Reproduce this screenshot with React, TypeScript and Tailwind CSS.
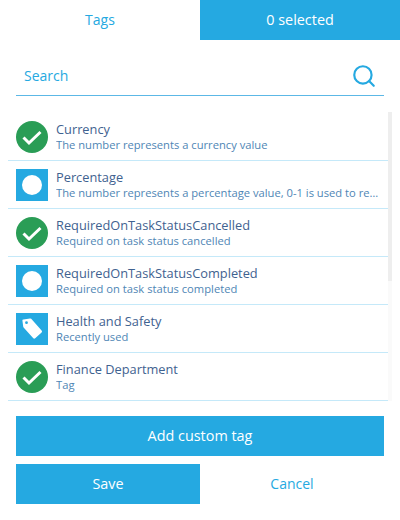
import { Search } from 'lucide-react'

type Tag = {
  name: string
  description: string
  icon: 'check' | 'circle' | 'tag'
}

const tags: Tag[] = [
  { name: 'Currency', description: 'The number represents a currency value', icon: 'check' },
  { name: 'Percentage', description: 'The number represents a percentage value, 0-1 is used to represent 0-100%', icon: 'circle' },
  { name: 'RequiredOnTaskStatusCancelled', description: 'Required on task status cancelled', icon: 'check' },
  { name: 'RequiredOnTaskStatusCompleted', description: 'Required on task status completed', icon: 'circle' },
  { name: 'Health and Safety', description: 'Recently used', icon: 'tag' },
  { name: 'Finance Department', description: 'Tag', icon: 'check' },
]

const TagIcon = ({ icon }: { icon: Tag['icon'] }) => {
  if (icon === 'check') {
    return (
      <div className="flex h-8 w-8 shrink-0 items-center justify-center rounded-full bg-[#2a9d56]">
        <svg width="32" height="32" viewBox="0 0 32 32" fill="none">
          <path d="M7.5 16.5l5.5 5.5L24.5 11" stroke="white" strokeWidth="3" />
        </svg>
      </div>
    )
  }
  if (icon === 'circle') {
    return (
      <div className="flex h-8 w-8 shrink-0 items-center justify-center bg-[#25a9e1]">
        <div className="h-5 w-5 rounded-full bg-white" />
      </div>
    )
  }
  return (
    <div className="flex h-8 w-8 shrink-0 items-center justify-center bg-[#25a9e1]">
      <svg width="32" height="32" viewBox="0 0 32 32">
        <path
          fillRule="evenodd"
          fill="white"
          d="M7.5 6.5L14 5.4a1.4 1.4 0 0 1 1.2 .4L25.6 17.6a1.4 1.4 0 0 1 0 1.9L19.2 25.2a1.4 1.4 0 0 1-1.9 0L7.6 14.6a1.4 1.4 0 0 1-.4-1L6.4 7.6a1 1 0 0 1 1.1-1.1zM10.5 8.3a1.4 1.4 0 1 0 0 2.8 1.4 1.4 0 0 0 0-2.8z"
        />
      </svg>
    </div>
  )
}

export default function App() {
  return (
    <div className="h-[520px] w-[400px] overflow-hidden bg-white font-['Open_Sans',sans-serif]">
      <div className="flex h-10 text-sm">
        <div className="flex flex-1 items-center justify-center text-[#25a9e1]">Tags</div>
        <div className="flex flex-1 items-center justify-center bg-[#25a9e1] text-[14.4px] font-medium text-white">0 selected</div>
      </div>

      <div className="mx-4 mt-3 flex h-11 items-center justify-between border-b border-[#5cb8e6] pl-2 pr-[7px] pt-1">
        <span className="text-sm text-[#25a9e1]">Search</span>
        <Search size={26} strokeWidth={2} className="text-[#25a9e1]" />
      </div>

      <div className="mt-4 flex h-[289px] pl-2">
        <div className="w-[380px] pt-px">
          {tags.map((tag) => (
            <div key={tag.name} className="flex h-12 items-center gap-2 border-b border-[#c5e9f9] pl-2">
              <TagIcon icon={tag.icon} />
              <div className="min-w-0 flex-1 pr-2">
                <div className="truncate text-[12.8px] leading-[17px] text-[#3f6290]">{tag.name}</div>
                <div className="truncate text-[11.2px] leading-[14px] text-[#4f86b5]">{tag.description}</div>
              </div>
            </div>
          ))}
        </div>
        <div className="h-full w-1 bg-[#fafafa]">
          <div className="h-[169px] bg-[#eeeeee]" />
        </div>
      </div>

      <div className="mx-4 mt-[15px] flex h-10 items-center justify-center bg-[#25a9e1] text-[14.4px] font-medium text-white">
        Add custom tag
      </div>
      <div className="mx-4 mt-2 flex h-10 text-sm">
        <div className="flex flex-1 items-center justify-center bg-[#25a9e1] text-[14.4px] font-medium text-white">Save</div>
        <div className="flex flex-1 items-center justify-center text-[#25a9e1]">Cancel</div>
      </div>
    </div>
  )
}
